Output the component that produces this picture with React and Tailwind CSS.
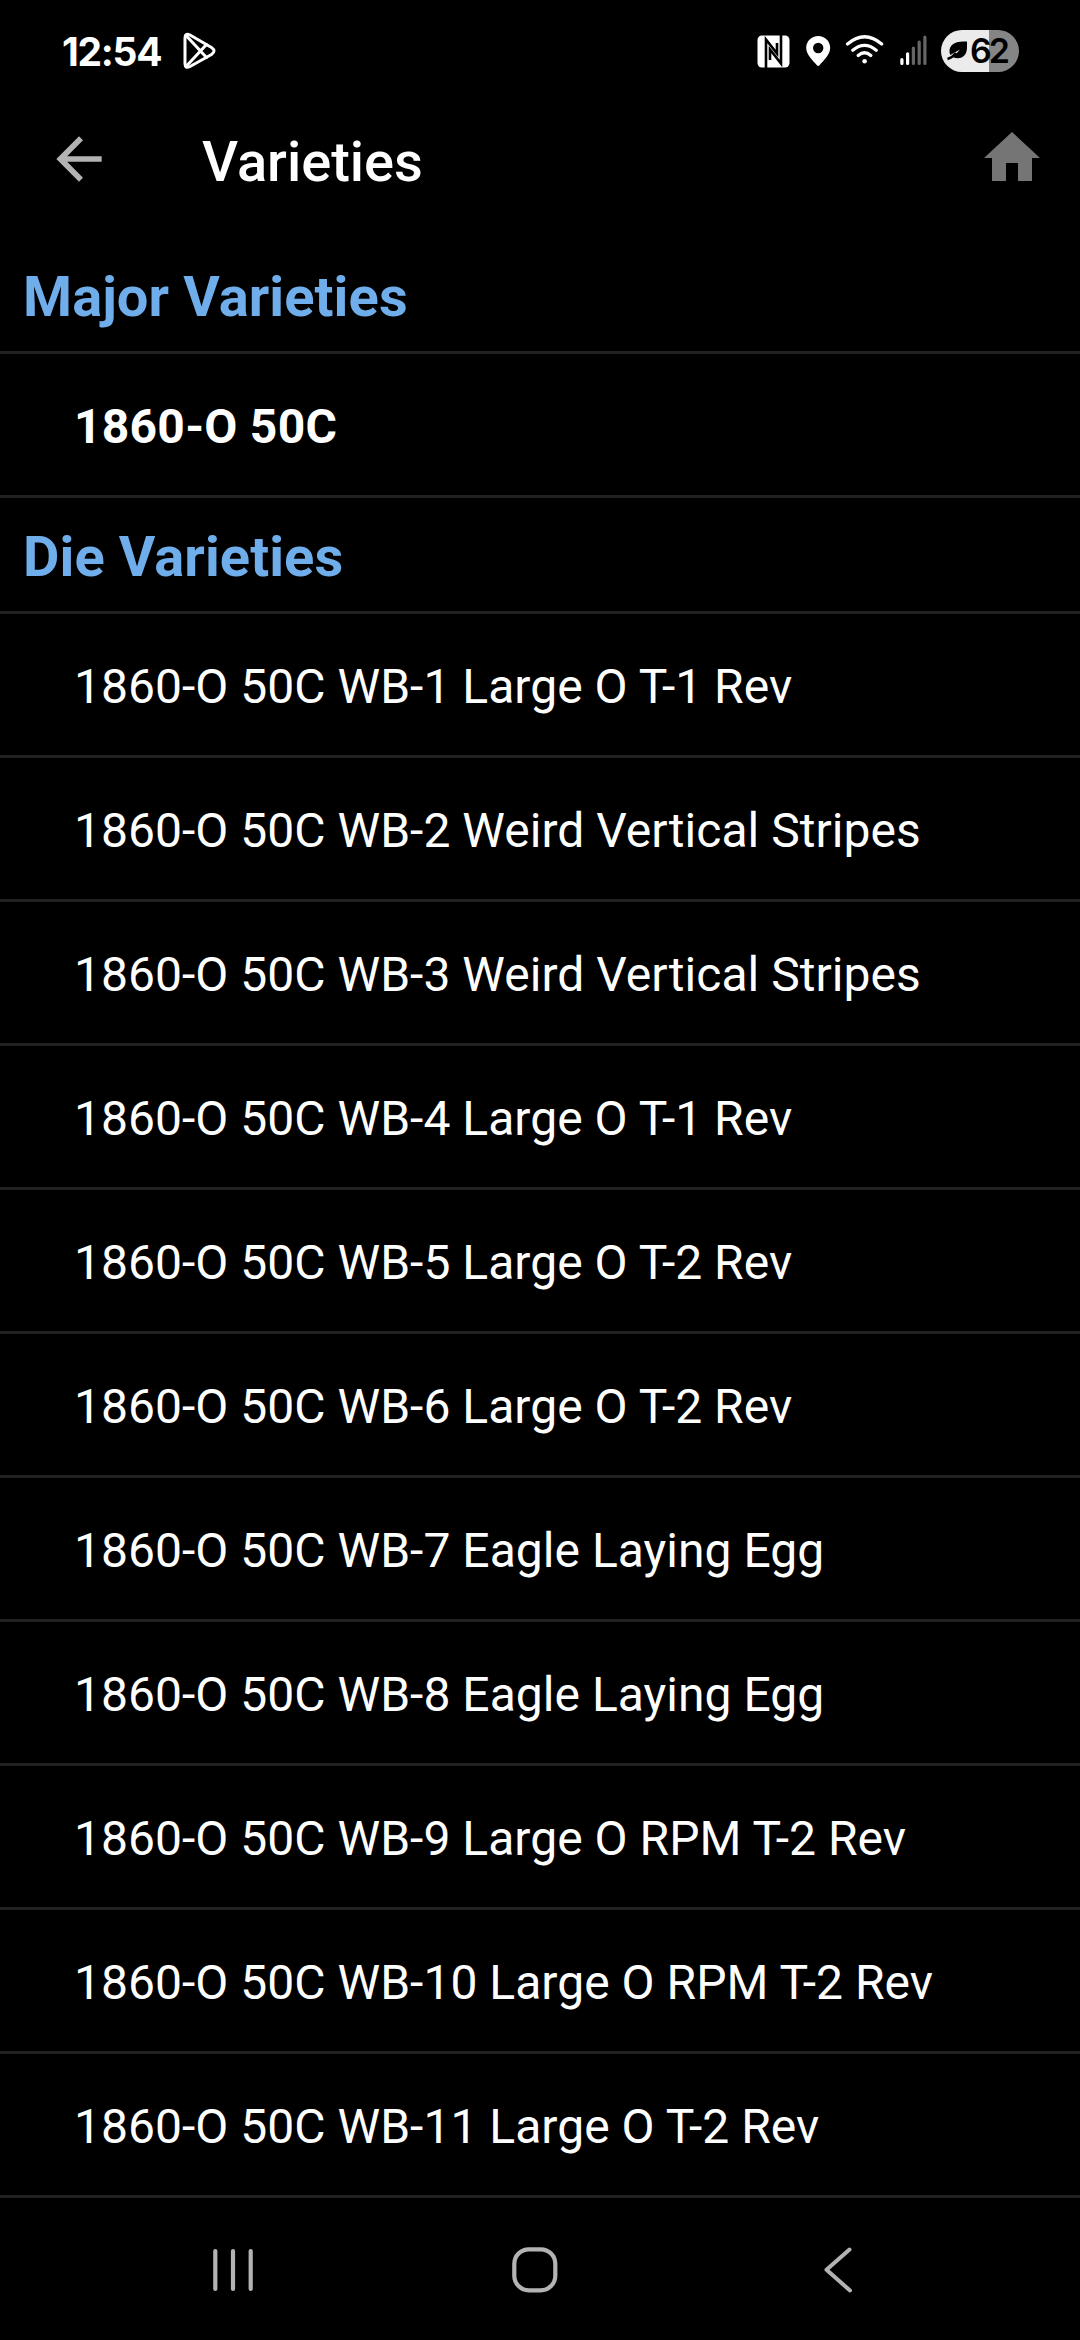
const majorVarieties = ["1860-O 50C"];

const dieVarieties = [
  "1860-O 50C WB-1 Large O T-1 Rev",
  "1860-O 50C WB-2 Weird Vertical Stripes",
  "1860-O 50C WB-3 Weird Vertical Stripes",
  "1860-O 50C WB-4 Large O T-1 Rev",
  "1860-O 50C WB-5 Large O T-2 Rev",
  "1860-O 50C WB-6 Large O T-2 Rev",
  "1860-O 50C WB-7 Eagle Laying Egg",
  "1860-O 50C WB-8 Eagle Laying Egg",
  "1860-O 50C WB-9 Large O RPM T-2 Rev",
  "1860-O 50C WB-10 Large O RPM T-2 Rev",
  "1860-O 50C WB-11 Large O T-2 Rev"
];

function StatusBar() {
  return (
    <div className="flex h-[102px] items-center pl-[62px] pr-[61px] font-['Inter',sans-serif]">
      <span className="w-[121px] text-[39px] leading-none font-bold tracking-[-1.3px] text-white">12:54</span>

      {/* Play */}
      <svg width="34" height="38" viewBox="0 0 34 38" fill="none" stroke="#fff" strokeWidth="3" strokeLinejoin="round" strokeLinecap="round">
        <path d="M2 6.2Q2 .6 7 3L28.500 15.500Q33.500 19 28.500 22.500L7 34.500Q2 37 2 31.800Z" />
        <path d="M3.500 4 23.500 25.500M3.500 34 23.500 12.500" />
      </svg>

      <div className="ml-auto flex items-center">
        {/* NFC */}
        <svg width="33" height="33" viewBox="0 0 33 33">
          <rect x=".5" y=".5" width="32" height="32" rx="4.500" fill="#fff" />
          <path d="M9 33V4.500L20 18.500V8M24 0V28.500L13 14.500V25" fill="none" stroke="#000" strokeWidth="2.600" />
        </svg>
        {/* Location */}
        <svg className="ml-4" width="25" height="33" viewBox="0 0 25 33">
          <path fill="#fff" fillRule="evenodd" d="M12.200 1C5.600 1 .2 6.100 .2 12.800c0 7 6.500 12.500 10.700 17.500q1.300 1.400 2.600 0c4.200-5 10.700-10.500 10.700-17.500C24.200 6.100 18.800 1 12.200 1Zm0 6.800a5.200 5.200 0 1 1 0 10.400 5.200 5.200 0 0 1 0-10.400Z" />
        </svg>
        {/* Wifi */}
        <svg className="ml-[14px]" width="40" height="33" viewBox="0 0 40 33" fill="none" stroke="#fff" strokeWidth="3.200" strokeLinecap="round">
          <path d="M2.500 9Q19.500-5.500 36.700 9M7.800 15.300Q19.500 5.500 31.200 15.300M13.200 20.500Q19.500 15 25.800 20.500" />
          <circle cx="19.600" cy="26.300" r="2.300" fill="#fff" stroke="none" />
        </svg>
        {/* Signal */}
        <svg className="ml-[15px]" width="27" height="33" viewBox="0 0 27 33" strokeWidth="3.200" strokeLinecap="round">
          <path stroke="#fff" d="M1.900 24.500V28.400M7.600 18.800V28.400" />
          <path stroke="#666" d="M13.400 13V28.400M19.200 7.200V28.400M24.900 2.200V28.400" />
        </svg>
        {/* Battery */}
        <div className="ml-[14px] flex h-[42px] w-[78px] items-center rounded-full bg-[linear-gradient(90deg,#ebebeb_62%,#858585_62%)] pl-[5px]">
          <svg width="24" height="22" viewBox="0 0 24 22">
            <path fill="#000" d="M21 1.500C15 1.500 9 1.500 5.500 5.500 3 8.500 3 12 4.300 15L14 9.500 7 17.300C12 19.500 17 18 19.500 14 21.500 10.500 21 6 21 1.500Z" />
            <path d="M1.500 19Q6 17.800 10 13" fill="none" stroke="#000" strokeWidth="2.400" />
          </svg>
          <span className="text-[34px] leading-none font-semibold tracking-[-3px] text-black">62</span>
        </div>
      </div>
    </div>
  );
}

function AppBar() {
  return (
    <div className="flex h-[136px] items-start pl-[45px] pr-[40px] text-white">
      <svg className="mt-[23px]" width="68" height="68" viewBox="0 0 24 24" fill="#b3b3b3">
        <path d="M20 11H7.830l5.590-5.590L12 4l-8 8 8 8 1.410-1.410L7.830 13H20v-2z" />
      </svg>
      <h1 className="ml-[89px] pt-[27px] text-[56px] leading-[66px] font-medium">Varieties</h1>
      <svg className="mt-[30px] ml-auto" width="56" height="49" viewBox="0 0 56 49" fill="#757575">
        <path d="M28 0 56 26H48V49H34V31H22V49H8V26H0Z" />
      </svg>
    </div>
  );
}

function SectionHeader({ title }) {
  return (
    <div className="h-[116px] border-b-[3px] border-[#212121] px-[23px] pt-[26px]">
      <h2 className="text-[56px] leading-[66px] font-bold tracking-[0.1px] text-[#6faeeb]">{title}</h2>
    </div>
  );
}

function VarietyRow({ name, major }) {
  return (
    <li className={`h-36 border-b-[3px] border-[#212121] px-[74px] pt-[45px] text-[48px] leading-[56px] text-white ${major ? "font-bold tracking-[0.25px]" : "font-normal tracking-[0.03px]"}`}>
      {name}
    </li>
  );
}

function NavBar() {
  return (
    <div className="flex flex-1 items-start pt-12 pl-[210px]">
      {/* Recents */}
      <svg width="46" height="48" viewBox="0 0 46 48" stroke="#b3b3b3" strokeWidth="4.200" strokeLinecap="round">
        <path d="M5.300 5V43M23 5V43M40.700 5V43" />
      </svg>
      {/* Home */}
      <svg className="ml-[254px]" width="48" height="48" viewBox="0 0 48 48" fill="none" stroke="#b3b3b3" strokeWidth="4.200">
        <rect x="4.300" y="3.300" width="41" height="41" rx="14.500" />
      </svg>
      {/* Back */}
      <svg className="ml-[262px]" width="36" height="48" viewBox="0 0 36 48" fill="none" stroke="#b3b3b3" strokeWidth="4" strokeLinecap="round" strokeLinejoin="round">
        <path d="M29.500 3.500 6.500 23.700 30 44.500" />
      </svg>
    </div>
  );
}

function App() {
  return (
    <div className="flex h-[2340px] w-[1080px] flex-col overflow-hidden bg-black font-['Roboto',sans-serif]">
      <StatusBar />
      <AppBar />

      <SectionHeader title="Major Varieties" />
      <ul>
        {majorVarieties.map((name) => (
          <VarietyRow key={name} name={name} major />
        ))}
      </ul>

      <SectionHeader title="Die Varieties" />
      <ul>
        {dieVarieties.map((name) => (
          <VarietyRow key={name} name={name} />
        ))}
      </ul>

      <NavBar />
    </div>
  );
}

export default App;
